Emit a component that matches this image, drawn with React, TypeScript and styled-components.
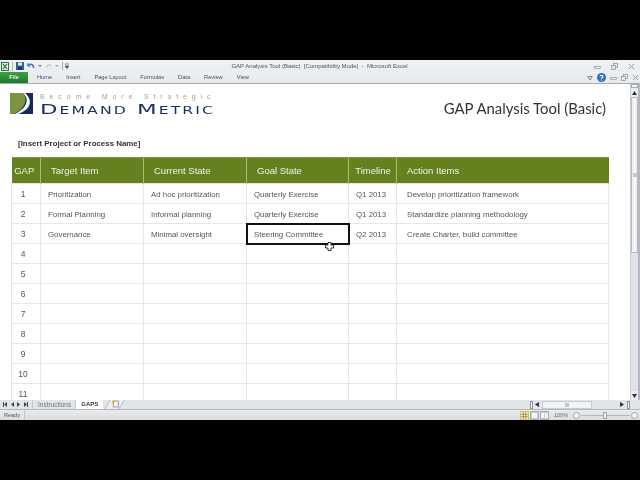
import React from "react";
import styled, { createGlobalStyle } from "styled-components";

const GlobalStyle = createGlobalStyle`
  html, body { margin: 0; padding: 0; background: #000; }
  * { box-sizing: border-box; }
`;

const Screen = styled.div`
  width: 640px;
  height: 480px;
  padding: 60px 0;
  background: #000;
  overflow: hidden;
  font-family: "Liberation Sans", Arial, sans-serif;
`;

const Window = styled.div`
  height: 360px;
  display: flex;
  flex-direction: column;
  background: #fff;
  filter: blur(0.4px);
`;

const TitleBar = styled.div`
  height: 12px;
  display: flex;
  align-items: center;
  padding: 0 5px 0 1px;
  background: linear-gradient(#f0f2f5, #e9ecf0);
`;

const Quick = styled.div`
  width: 70px;
  height: 12px;
  display: flex;
  align-items: center;
  gap: 3px;
`;

const WindowTitle = styled.div`
  flex: 1;
  text-align: center;
  font-size: 6px;
  line-height: 12px;
  color: #4f545b;
  white-space: pre;
  padding-right: 26px;
`;

const Controls = styled.div<{ $gap: number }>`
  display: flex;
  align-items: center;
  gap: ${(p) => p.$gap}px;
`;

const Ribbon = styled.div`
  height: 12px;
  display: flex;
  align-items: center;
  padding-right: 1px;
  background: linear-gradient(#eceef1, #e6e9ed);
  border-bottom: 1px solid #a9acb0;
`;

const FileTab = styled.div`
  width: 28px;
  height: 11px;
  margin-right: 9px;
  text-align: center;
  font-size: 5.5px;
  font-weight: bold;
  line-height: 11px;
  color: #eaf5ea;
  background: linear-gradient(#3fa045, #1f7a2c);
`;

const RibbonTabs = styled.div`
  flex: 1;
  display: flex;
  gap: 14px;
  font-size: 5.7px;
  line-height: 11px;
  color: #4d5157;
`;

const SheetArea = styled.div`
  flex: 1;
  min-height: 0;
  display: flex;
`;

const Sheet = styled.div`
  position: relative;
  flex: 1;
  min-width: 0;
  overflow: hidden;
  background: #fff;
`;

const Banner = styled.div`
  height: 52px;
  padding: 9px 24px 0 10px;
  display: flex;
  justify-content: space-between;
`;

const LogoWrap = styled.div`
  display: flex;
  gap: 7px;
  height: 24px;
`;

const LogoText = styled.div`
  display: flex;
  flex-direction: column;
`;

const Tagline = styled.div`
  font-size: 7px;
  line-height: 8px;
  letter-spacing: 4.87px;
  color: #a3a69e;
  white-space: nowrap;
`;

const Brand = styled.div`
  margin-top: 2px;
  font-family: "DejaVu Sans", sans-serif;
  font-size: 14.5px;
  line-height: 12px;
  letter-spacing: 1.3px;
  color: #1b2f5e;
  white-space: nowrap;
  font-variant: small-caps;
  transform: scaleX(1.57);
  transform-origin: left;
`;

const PageTitle = styled.div`
  margin-top: 5px;
  font-family: Lato, sans-serif;
  font-size: 14.9px;
  line-height: 20px;
  color: #333;
  white-space: nowrap;
`;

const ProjectName = styled.div`
  height: 21px;
  padding: 1px 0 0 18px;
  font-size: 7.9px;
  font-weight: bold;
  line-height: 14px;
  color: #333;
`;

const Grid = styled.table`
  margin-left: 11px;
  width: 597px;
  table-layout: fixed;
  border-collapse: collapse;
  font-size: 7.85px;
`;

const HeadRow = styled.tr`
  height: 26px;
  background: #64801f;
`;

const HeadCell = styled.th<{ $pad: number; $trim?: number; $center?: boolean }>`
  padding: 0 ${(p) => p.$trim ?? 0}px 0 ${(p) => p.$pad}px;
  border-left: 1px solid #a9bd6c;
  border-top: 1px solid #7d9440;
  font-size: 9.5px;
  font-weight: normal;
  text-align: ${(p) => (p.$center ? "center" : "left")};
  color: #f1f4e4;
  white-space: nowrap;
  &:first-child { border-left: none; }
`;

const Row = styled.tr`
  height: 20px;
`;

const Cell = styled.td<{ $pad: number; $number?: boolean; $selected?: boolean }>`
  padding: 1px ${(p) => (p.$number ? 6 : 0)}px 0 ${(p) => p.$pad}px;
  border: 1px solid #e6e6e2;
  text-align: ${(p) => (p.$number ? "center" : "left")};
  font-size: ${(p) => (p.$number ? 8.5 : 7.85)}px;
  color: #555;
  white-space: nowrap;
  ${(p) => (p.$selected ? "outline: 2px solid #111; outline-offset: -1px;" : "")}
`;

const Pointer = styled.svg`
  position: absolute;
  left: 325px;
  top: 158px;
`;

const ScrollBar = styled.div`
  width: 10px;
  display: flex;
  flex-direction: column;
  background: #dfe2e6;
  border-left: 1px solid #c9ccd1;
  border-right: 2px solid #b4b8be;
`;

const SplitBox = styled.div`
  height: 4px;
  background: #f3f4f6;
  border: 1px solid #a9adb3;
`;

const ScrollArrow = styled.div`
  height: 9px;
  display: flex;
  align-items: center;
  justify-content: center;
  background: #eceef1;
`;

const ScrollThumb = styled.div`
  height: 156px;
  display: flex;
  align-items: center;
  justify-content: center;
  background: linear-gradient(90deg, #e8eaed, #f7f8f9 50%, #e8eaed);
  border: 1px solid #b9bdc2;
`;

const ThumbGrip = styled.div`
  width: 4px;
  height: 4px;
  background: #c3c6ca;
`;

const ScrollTrack = styled.div`
  flex: 1;
`;

const TabStrip = styled.div`
  height: 9px;
  display: flex;
  align-items: center;
  background: #e1e4e8;
`;

const TabNav = styled.div`
  width: 32px;
  height: 9px;
  display: flex;
  align-items: center;
  padding-left: 3px;
  gap: 3px;
`;

const SheetTab = styled.div<{ $active?: boolean }>`
  height: 9px;
  padding: 0 ${(p) => (p.$active ? 5 : 4)}px 0 5px;
  font-size: ${(p) => (p.$active ? 6 : 6.5)}px;
  line-height: 9px;
  color: ${(p) => (p.$active ? "#333" : "#70757b")};
  font-weight: ${(p) => (p.$active ? "bold" : "normal")};
  background: ${(p) => (p.$active ? "#fff" : "#e1e4e8")};
  border-left: 1px solid #c4c7cc;
`;

const NewTab = styled.div`
  width: 15px;
  height: 9px;
  margin-left: 4px;
  display: flex;
  justify-content: center;
  transform: skewX(-30deg);
  background: #eceef1;
  border-left: 1px solid #b5b9be;
  border-right: 1px solid #b5b9be;
`;

const StripSpacer = styled.div`
  flex: 1;
`;

const HScroll = styled.div`
  width: 100px;
  height: 9px;
  margin-right: 10px;
  display: flex;
  align-items: center;
`;

const ScrollEnd = styled.div`
  width: 3px;
  height: 8px;
  background: #f3f4f6;
  border: 1px solid #8f9399;
`;

const HThumb = styled.div`
  width: 50px;
  height: 8px;
  margin: 0 28px 0 3px;
  display: flex;
  align-items: center;
  justify-content: center;
  background: #f1f3f5;
  border: 1px solid #c8ccd1;
`;

const StatusBar = styled.div`
  height: 11px;
  display: flex;
  align-items: center;
  background: linear-gradient(#e9ebee, #d9dce0);
  border-top: 1px solid #b4b7bb;
  font-size: 5.5px;
  color: #555;
`;

const Ready = styled.div`
  width: 25px;
  padding-left: 4px;
  line-height: 10px;
  border-right: 1px solid #c2c5c9;
`;

const ViewButton = styled.div<{ $active?: boolean }>`
  width: 9px;
  height: 9px;
  margin-right: 1px;
  display: flex;
  align-items: center;
  justify-content: center;
  background: ${(p) => (p.$active ? "#fbeeb0" : "#c9ccd0")};
  border: 1px solid ${(p) => (p.$active ? "#e0c04f" : "#a9acb0")};
`;

const Zoom = styled.div`
  width: 19px;
  margin-left: 4px;
  font-size: 5.5px;
  color: #666;
`;

const Slider = styled.div`
  position: relative;
  width: 49px;
  height: 1px;
  margin: 0 1px;
  background: #b5b8bc;
`;

const SliderKnob = styled.div`
  position: absolute;
  left: 22px;
  top: -3px;
  width: 4px;
  height: 7px;
  background: #f3f4f5;
  border: 1px solid #9da0a4;
`;

const RoundButton = styled.div`
  width: 7px;
  height: 7px;
  border-radius: 50%;
  background: #f3f4f5;
  border: 1px solid #a0a3a7;
`;

const StatusEnd = styled.div`
  width: 2px;
`;

const columns = [29, 103, 103, 102, 48, 212];

const headers: [string, number, number?, boolean?][] = [
  ["GAP", 0, 3, true],
  ["Target Item", 10],
  ["Current State", 10],
  ["Goal State", 10],
  ["Timeline", 1, 0, true],
  ["Action Items", 10],
];

const rows = [
  ["1", "Prioritization", "Ad hoc prioritization", "Quarterly Exercise", "Q1 2013", "Develop prioritization framework"],
  ["2", "Formal Planning", "Informal planning", "Quarterly Exercise", "Q1 2013", "Standardize planning methodology"],
  ["3", "Governance", "Minimal oversight", "Steering Committee", "Q2 2013", "Create Charter, build committee"],
  ["4", "", "", "", "", ""],
  ["5", "", "", "", "", ""],
  ["6", "", "", "", "", ""],
  ["7", "", "", "", "", ""],
  ["8", "", "", "", "", ""],
  ["9", "", "", "", "", ""],
  ["10", "", "", "", "", ""],
  ["11", "", "", "", "", ""],
];

const ribbonTabs = ["Home", "Insert", "Page Layout", "Formulas", "Data", "Review", "View"];

const MinIcon = () => (
  <svg width="7" height="7" viewBox="0 0 7 7">
    <rect x="0.5" y="3.5" width="6" height="2" fill="#e3e6ea" stroke="#8c9197" strokeWidth="0.6" />
  </svg>
);

const RestoreIcon = () => (
  <svg width="7" height="7" viewBox="0 0 7 7" fill="#e3e6ea" stroke="#8c9197" strokeWidth="0.7">
    <rect x="2.5" y="0.5" width="4" height="4" />
    <rect x="0.5" y="2.5" width="4" height="4" />
  </svg>
);

const CloseIcon = () => (
  <svg width="7" height="7" viewBox="0 0 7 7" stroke="#9a9ea4" strokeWidth="1">
    <path d="M1 1l5 5M6 1L1 6" />
  </svg>
);

const NavArrow = ({ flip, end }: { flip?: boolean; end?: boolean }) => (
  <svg width="4" height="5" viewBox="0 0 4 5" style={flip ? { transform: "scaleX(-1)" } : undefined}>
    <path d="M4 0v5L1 2.500z" fill="#444" />
    {end && <rect width="1" height="5" fill="#444" />}
  </svg>
);

const Logo = () => (
  <svg width="23" height="21" viewBox="0 0 23 21">
    <rect width="23" height="21" fill="#15295c" />
    <path d="M0 0h13C18 5 16 15 4 21H0z" fill="#7d9440" />
    <path d="M13 0C20 6 17 15 5 21h3C20 17 24 8 15 0z" fill="#fff" />
  </svg>
);

export default function App() {
  return (
    <Screen>
      <GlobalStyle />
      <Window>
        <TitleBar>
          <Quick>
            <svg width="8" height="9" viewBox="0 0 8 9">
              <rect width="8" height="9" fill="#1f7a3c" />
              <rect x="1" y="1" width="6" height="7" fill="#e4efe2" />
              <path d="M2 2l4 5M6 2L2 7" stroke="#1f6a34" strokeWidth="1.2" />
            </svg>
            <svg width="1" height="9" viewBox="0 0 1 9">
              <path d="M.5 0v9" stroke="#b5b9be" />
            </svg>
            <svg width="8" height="8" viewBox="0 0 8 8">
              <rect width="8" height="8" fill="#3a5a94" />
              <rect x="2" y="0.5" width="4" height="3" fill="#dfe6f2" />
              <rect x="2" y="5" width="4" height="3" fill="#1e3566" />
            </svg>
            <svg width="8" height="8" viewBox="0 0 8 8" fill="none" stroke="#3a68a8" strokeWidth="1.4">
              <path d="M1 3.500C3 1 7 2 6.500 6" />
              <path d="M.8 1v3h3" strokeWidth="1" />
            </svg>
            <svg width="4" height="4" viewBox="0 0 4 4"><path d="M0 1h4L2 3z" fill="#777" /></svg>
            <svg width="7" height="7" viewBox="0 0 7 7" fill="none" stroke="#bcc0c6" strokeWidth="1.1">
              <path d="M6 3C4.500 1 1.500 1.500 1.500 5" />
            </svg>
            <svg width="4" height="4" viewBox="0 0 4 4"><path d="M0 1h4L2 3z" fill="#aaa" /></svg>
            <svg width="7" height="8" viewBox="0 0 7 8">
              <path d="M.5 0v8" stroke="#a5a9ae" />
              <path d="M3 2h4M3 4h4L5 6.500z" stroke="#555" strokeWidth="0.7" fill="#555" />
            </svg>
          </Quick>
          <WindowTitle>GAP Analysis Tool (Basic)  [Compatibility Mode]  -  Microsoft Excel</WindowTitle>
          <Controls $gap={10}>
            <MinIcon />
            <RestoreIcon />
            <CloseIcon />
          </Controls>
        </TitleBar>
        <Ribbon>
          <FileTab>File</FileTab>
          <RibbonTabs>
            {ribbonTabs.map((t) => (
              <span key={t}>{t}</span>
            ))}
          </RibbonTabs>
          <Controls $gap={4}>
            <svg width="6" height="6" viewBox="0 0 6 6" fill="none" stroke="#80858b">
              <path d="M.7 1.500h4.600L3 5z" />
            </svg>
            <svg width="9" height="9" viewBox="0 0 9 9">
              <circle cx="4.500" cy="4.500" r="4.500" fill="#2f6fc4" />
              <path d="M3 3.500C3.200 1.800 6 1.900 6 3.500 6 4.500 4.500 4.500 4.500 5.800" fill="none" stroke="#fff" strokeWidth="1.100" />
              <rect x="4" y="6.600" width="1" height="1" fill="#fff" />
            </svg>
            <MinIcon />
            <RestoreIcon />
            <CloseIcon />
          </Controls>
        </Ribbon>
        <SheetArea>
          <Sheet>
            <Banner>
              <LogoWrap>
                <Logo />
                <LogoText>
                  <Tagline>Become More Strategic</Tagline>
                  <Brand>Demand Metric</Brand>
                </LogoText>
              </LogoWrap>
              <PageTitle>GAP Analysis Tool (Basic)</PageTitle>
            </Banner>
            <ProjectName>[Insert Project or Process Name]</ProjectName>
            <Grid>
              <colgroup>
                {columns.map((w, i) => (
                  <col key={i} width={w} />
                ))}
              </colgroup>
              <thead>
                <HeadRow>
                  {headers.map(([label, pad, trim, center]) => (
                    <HeadCell key={label} $pad={pad} $trim={trim} $center={center}>
                      {label}
                    </HeadCell>
                  ))}
                </HeadRow>
              </thead>
              <tbody>
                {rows.map((row, r) => (
                  <Row key={r}>
                    {row.map((text, c) => (
                      <Cell
                        key={c}
                        $number={c === 0}
                        $pad={c === 0 ? 0 : c === 5 ? 10 : 7}
                        $selected={r === 2 && c === 3}
                      >
                        {text}
                      </Cell>
                    ))}
                  </Row>
                ))}
              </tbody>
            </Grid>
            <Pointer width="9" height="9" viewBox="0 0 9 9">
              <path d="M3 .5h3V3h2.500v3H6v2.500H3V6H.5V3H3z" fill="#fff" stroke="#222" strokeWidth="0.9" />
            </Pointer>
          </Sheet>
          <ScrollBar>
            <SplitBox />
            <ScrollArrow>
              <svg width="5" height="4" viewBox="0 0 5 4"><path d="M0 4l2.500-4L5 4z" fill="#333" /></svg>
            </ScrollArrow>
            <ScrollThumb>
              <ThumbGrip />
            </ScrollThumb>
            <ScrollTrack />
            <ScrollArrow>
              <svg width="5" height="4" viewBox="0 0 5 4"><path d="M0 0l2.500 4L5 0z" fill="#333" /></svg>
            </ScrollArrow>
          </ScrollBar>
        </SheetArea>
        <TabStrip>
          <TabNav>
            <NavArrow end />
            <NavArrow />
            <NavArrow flip />
            <NavArrow flip end />
          </TabNav>
          <SheetTab>Instructions</SheetTab>
          <SheetTab $active>GAPS</SheetTab>
          <NewTab>
            <svg width="8" height="8" viewBox="0 0 8 8" style={{ transform: "skewX(30deg)" }}>
              <rect x="2" y="1" width="5" height="6" fill="#f4f5f6" stroke="#7a8088" strokeWidth="0.7" />
              <circle cx="2" cy="2" r="1.500" fill="#e0b83c" />
            </svg>
          </NewTab>
          <StripSpacer />
          <HScroll>
            <ScrollEnd />
            <svg width="4" height="5" viewBox="0 0 4 5" style={{ margin: "0 0 0 2px" }}>
              <path d="M4 0v5L0 2.500z" fill="#333" />
            </svg>
            <HThumb>
              <ThumbGrip />
            </HThumb>
            <svg width="4" height="5" viewBox="0 0 4 5" style={{ marginRight: 3 }}>
              <path d="M0 0v5l4-2.500z" fill="#333" />
            </svg>
            <ScrollEnd />
          </HScroll>
        </TabStrip>
        <StatusBar>
          <Ready>Ready</Ready>
          <StripSpacer />
          <ViewButton $active>
            <svg width="7" height="7" viewBox="0 0 7 7" fill="none" stroke="#7a7a60" strokeWidth="0.7">
              <path d="M2.300 0v7M4.700 0v7M0 2.300h7M0 4.700h7" />
            </svg>
          </ViewButton>
          <ViewButton>
            <svg width="5" height="5" viewBox="0 0 5 5"><rect width="5" height="5" fill="#f2f3f4" /></svg>
          </ViewButton>
          <ViewButton>
            <svg width="7" height="5" viewBox="0 0 7 5"><path d="M0 0h3v5H0zM4 0h3v5H4z" fill="#f2f3f4" /></svg>
          </ViewButton>
          <Zoom>100%</Zoom>
          <RoundButton />
          <Slider>
            <SliderKnob />
          </Slider>
          <RoundButton />
          <StatusEnd />
        </StatusBar>
      </Window>
    </Screen>
  );
}
